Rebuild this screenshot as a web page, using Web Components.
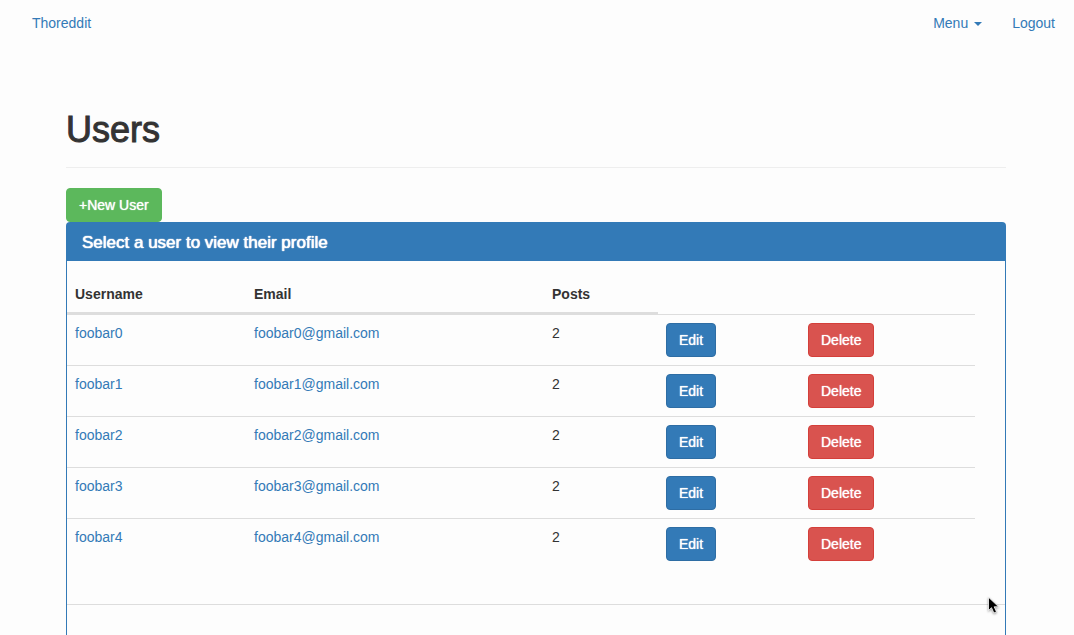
<!DOCTYPE html>
<html lang="en">
<head>
<meta charset="utf-8">
<title>Thoreddit</title>
<style>
  body {
    margin: 0;
    background: #fdfdfd;
    color: #333;
    font: 14px/20px "Liberation Sans", Arial, sans-serif;
  }
</style>
</head>
<body>
<app-shell>
  <site-nav slot="nav"></site-nav>
  <page-header>Users</page-header>
  <app-button kind="success">+New User</app-button>
  <data-panel heading="Select a user to view their profile">
    <user-table></user-table>
  </data-panel>
</app-shell>
<mouse-pointer></mouse-pointer>

<script>
  const define = (name, html, setup) => {
    const template = document.createElement('template');
    template.innerHTML = html;
    customElements.define(name, class extends HTMLElement {
      constructor() {
        super();
        this.attachShadow({ mode: 'open' }).append(template.content.cloneNode(true));
      }
      connectedCallback() {
        if (setup) setup(this, this.shadowRoot);
      }
    });
  };

  define('app-shell', `
    <style>
      :host { display: flex; flex-direction: column; height: 100vh; overflow: hidden; }
      main {
        flex: 1;
        display: flex;
        flex-direction: column;
        align-items: flex-start;
        box-sizing: border-box;
        width: 100%;
        max-width: 972px;
        margin: 0 auto;
        padding: 0 17px 0 15px;
      }
    </style>
    <slot name="nav"></slot>
    <main><slot></slot></main>`);

  define('site-nav', `
    <style>
      :host { display: block; }
      nav {
        display: flex;
        justify-content: space-between;
        padding: 13px 19px 17px 32px;
      }
      div { display: flex; gap: 30px; }
      a, button { color: #337ab7; text-decoration: none; }
      button {
        display: flex;
        align-items: center;
        gap: 6px;
        padding: 0;
        border: 0;
        background: none;
        font: inherit;
        cursor: pointer;
      }
      i {
        margin-top: 2px;
        border-top: 4px solid;
        border-left: 4px solid transparent;
        border-right: 4px solid transparent;
      }
    </style>
    <nav>
      <a href="#home">Thoreddit</a>
      <div>
        <button type="button" aria-haspopup="true">Menu<i></i></button>
        <a href="#logout">Logout</a>
      </div>
    </nav>`);

  define('page-header', `
    <style>
      :host {
        display: block;
        align-self: stretch;
        margin: 60px 0 20px;
        padding-bottom: 17px;
        border-bottom: 1px solid #eee;
      }
      h1 {
        margin: 0;
        font-size: 36px;
        font-weight: 400;
        line-height: 40px;
        -webkit-text-stroke: 1px;
      }
    </style>
    <h1><slot></slot></h1>`);

  define('app-button', `
    <style>
      :host { display: block; width: fit-content; --fill: #337ab7; --edge: #2e6da4; }
      :host([kind="success"]) { --fill: #5cb85c; --edge: #5cb85c; }
      :host([kind="danger"]) { --fill: #d9534f; --edge: #d43f3a; }
      button {
        display: block;
        padding: 6px 12px;
        border: 1px solid var(--edge);
        border-radius: 4px;
        background: var(--fill);
        color: #fff;
        font: inherit;
        text-shadow: 0 0 1px #fff;
        cursor: pointer;
      }
    </style>
    <button type="button"><slot></slot></button>`);

  define('data-panel', `
    <style>
      :host {
        flex: 1;
        display: flex;
        flex-direction: column;
        align-self: stretch;
        border: solid #337ab7;
        border-width: 1px 1px 0;
        border-radius: 4px 4px 0 0;
      }
      h3 {
        margin: 0;
        padding: 10px 15px 8px;
        background: #337ab7;
        color: #fff;
        font-size: 17px;
        font-weight: 400;
        line-height: 20px;
        text-shadow: 0 0 1px #fff, 0 0 1px #fff;
      }
      section { padding: 15px 30px 35px 0; }
      footer { flex: 1; border-top: 1px solid #ddd; }
    </style>
    <h3></h3>
    <section><slot></slot></section>
    <footer></footer>`, (host, root) => {
      root.querySelector('h3').textContent = host.getAttribute('heading');
    });

  define('user-table', `
    <style>
      :host { display: block; }
      table { width: 100%; table-layout: fixed; border-spacing: 0; }
      th, td { padding: 8px; text-align: left; vertical-align: top; }
      th { border-bottom: 2px solid #ddd; }
      thead td { padding: 0; }
      tbody td { border-top: 1px solid #ddd; }
      a { color: #337ab7; text-decoration: none; }
      .name { width: 179px; }
      .email { width: 298px; }
      .posts { width: 114px; }
      .edit { width: 142px; }
    </style>
    <table>
      <colgroup><col class="name"><col class="email"><col class="posts"><col class="edit"><col></colgroup>
      <thead><tr><th>Username</th><th>Email</th><th>Posts</th><td></td><td></td></tr></thead>
      <tbody></tbody>
    </table>`, (host, root) => {
      root.querySelector('tbody').innerHTML = [0, 1, 2, 3, 4].map(n => `
        <tr>
          <td><a href="#user-${n}">foobar${n}</a></td>
          <td><a href="mailto:foobar${n}@gmail.com">foobar${n}@gmail.com</a></td>
          <td>2</td>
          <td><app-button>Edit</app-button></td>
          <td><app-button kind="danger">Delete</app-button></td>
        </tr>`).join('');
    });

  define('mouse-pointer', `
    <style>
      :host { position: absolute; left: 987px; top: 596px; pointer-events: none; }
      svg { display: block; filter: drop-shadow(0 1px 1px #0006); }
    </style>
    <svg width="14" height="20" viewBox="0 0 14 20" aria-hidden="true">
      <path d="M1.5 1.2V14.5l3-2.8 2.4 5.3 2.6-1.1-2.3-5.1h4.4z" fill="#000" stroke="#fff" stroke-width=".8"/>
    </svg>`);
</script>
</body>
</html>
